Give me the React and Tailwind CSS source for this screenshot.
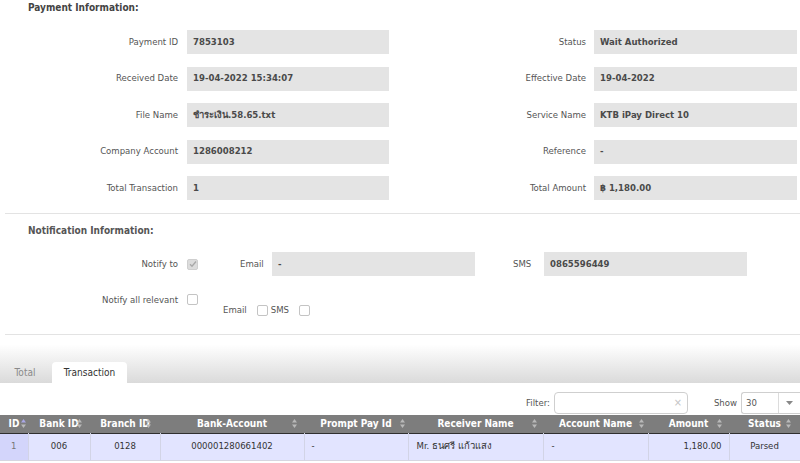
import React from "react";

const FONT = { fontFamily: '"DejaVu Sans Condensed", "DejaVu Sans", "Noto Sans", sans-serif' };

const leftRows = [
  ["Payment ID", "7853103"],
  ["Received Date", "19-04-2022 15:34:07"],
  ["File Name", "ชำระเงิน.58.65.txt"],
  ["Company Account", "1286008212"],
  ["Total Transaction", "1"],
];

const rightRows = [
  ["Status", "Wait Authorized"],
  ["Effective Date", "19-04-2022"],
  ["Service Name", "KTB iPay Direct 10"],
  ["Reference", "-"],
  ["Total Amount", "฿ 1,180.00"],
];

const columns = [
  { name: "ID", w: 28, icon: 2, active: true },
  { name: "Bank ID", w: 62, icon: 8 },
  { name: "Branch ID", w: 70, icon: 9 },
  { name: "Bank-Account", w: 144, icon: 7 },
  { name: "Prompt Pay Id", w: 104, icon: 3 },
  { name: "Receiver Name", w: 135, icon: 6 },
  { name: "Account Name", w: 105, icon: 4 },
  { name: "Amount", w: 81, icon: 7 },
  { name: "Status", w: 71, icon: 9 },
];

const row = [
  { v: "1", a: "text-center", id: true },
  { v: "006", a: "text-center" },
  { v: "0128", a: "text-center" },
  { v: "000001280661402", a: "text-center" },
  { v: "-", a: "text-left pl-[7px]" },
  { v: "Mr. ธนศรี แก้วแสง", a: "text-left pl-[8px]" },
  { v: "-", a: "text-left pl-[8px]" },
  { v: "1,180.00", a: "text-right pr-[7px]" },
  { v: "Parsed", a: "text-center" },
];

function SortIcon({ active }) {
  return (
    <svg width="5" height="9" viewBox="0 0 5 9">
      <path d="M2.5 0L5 3.5H0z" fill={active ? "#a9a6e6" : "#b9b9b9"} />
      <path d="M2.5 9L5 5.5H0z" fill="#b9b9b9" />
    </svg>
  );
}

function Checkbox({ checked }) {
  return (
    <span
      className={`inline-flex items-center justify-center w-[11px] h-[11px] rounded-[2px] border ${
        checked ? "bg-[#dcdcdc] border-[#cfcfcf]" : "bg-white border-[#c4c4c4]"
      }`}
    >
      {checked && (
        <svg width="8" height="8" viewBox="0 0 8 8">
          <path d="M1 4.2L3 6.2L7 1.5" stroke="#a8a8a8" strokeWidth="1.3" fill="none" />
        </svg>
      )}
    </span>
  );
}

function Field({ label, value, labelW, gap, inputW }) {
  return (
    <div className="flex items-center h-6">
      <div className="text-right text-[9.5px] text-[#555]" style={{ width: labelW }}>
        {label}
      </div>
      <div
        className="h-6 bg-[#e4e4e4] flex items-center pl-[6px] text-[9.5px] font-bold text-[#4a4a4a]"
        style={{ marginLeft: gap, width: inputW }}
      >
        {value}
      </div>
    </div>
  );
}

export default function App() {
  return (
    <div className="w-[800px] h-[463px] bg-white overflow-hidden" style={FONT}>
      {/* Payment Information */}
      <div className="pl-[28px] h-[30px] text-[10px] font-bold text-[#444]">
        Payment Information:
      </div>
      <div className="flex">
        <div className="w-[400px] flex flex-col gap-y-[12.5px]">
          {leftRows.map(([l, v]) => (
            <Field key={l} label={l} value={v} labelW={178} gap={9} inputW={202} />
          ))}
        </div>
        <div className="w-[400px] flex flex-col gap-y-[12.5px]">
          {rightRows.map(([l, v]) => (
            <Field key={l} label={l} value={v} labelW={186} gap={8} inputW={203} />
          ))}
        </div>
      </div>

      <div className="ml-[5px] mt-[13px] border-t border-[#e3e3e3]" />

      {/* Notification Information */}
      <div className="pl-[28px] pt-[9px] h-[38px] text-[10px] font-bold text-[#555]">
        Notification Information:
      </div>
      <div className="flex items-center h-6">
        <div className="w-[178px] text-right text-[9.5px] text-[#555]">Notify to</div>
        <div className="ml-[9px] flex">
          <Checkbox checked />
        </div>
        <div className="ml-[42px] w-[23px] text-[9.5px] text-[#555]">Email</div>
        <div className="ml-[9px] w-[203px] h-6 bg-[#e4e4e4] flex items-center pl-[6px] text-[9.5px] font-bold text-[#4a4a4a]">
          -
        </div>
        <div className="ml-[38px] w-[20px] text-[9.5px] text-[#555]">SMS</div>
        <div className="ml-[11px] w-[203px] h-6 bg-[#e4e4e4] flex items-center pl-[6px] text-[9.5px] font-bold text-[#4a4a4a]">
          0865596449
        </div>
      </div>
      <div className="flex h-[58px] pt-[18px]">
        <div className="w-[178px] text-right text-[9.5px] text-[#555] leading-[11px]">
          Notify all relevant
        </div>
        <div className="ml-[9px] flex">
          <Checkbox />
        </div>
        <div className="ml-[25px] flex items-center gap-[10px] pt-[11px] h-[22px] text-[9.5px] text-[#555]">
          <span>Email</span>
          <span className="flex items-center gap-[3px]">
            <Checkbox />
            <span>SMS</span>
          </span>
          <Checkbox />
        </div>
      </div>

      <div className="ml-[5px] border-t border-[#e3e3e3]" />

      {/* Tabs */}
      <div className="h-[48px] bg-gradient-to-b from-white from-[20%] to-[#dadada] flex items-end pl-[5px]">
        <div className="w-[40px] h-[21px] flex items-center justify-center text-[10px] text-[#8a8a8a]">
          Total
        </div>
        <div className="ml-[7px] w-[75px] h-[21px] bg-white rounded-t-[4px] flex items-center justify-center text-[10px] text-[#333]">
          Transaction
        </div>
      </div>

      {/* Filter */}
      <div className="h-[32px] pt-[8px] flex items-center justify-end text-[9.5px] text-[#555]">
        <span>Filter:</span>
        <div className="ml-[4px] w-[134px] h-[22px] border border-[#cfcfcf] rounded-[4px] bg-white flex items-center justify-end pr-[5px] text-[11px] text-[#c4c4c4]">
          ×
        </div>
        <span className="ml-[26px]">Show</span>
        <div className="ml-[4px] w-[59px] h-[22px] border border-[#cfcfcf] rounded-l-[3px] border-r-0 bg-white flex items-center">
          <span className="pl-[4px] w-[36px] text-[#555]">30</span>
          <span className="flex-1 h-full border-l border-[#dcdcdc] flex items-center justify-center">
            <svg width="7" height="4" viewBox="0 0 7 4">
              <path d="M0 0H7L3.5 4z" fill="#888" />
            </svg>
          </span>
        </div>
      </div>

      {/* Table */}
      <table className="table-fixed border-collapse w-[800px]">
        <colgroup>
          {columns.map((c) => (
            <col key={c.name} style={{ width: c.w }} />
          ))}
        </colgroup>
        <thead>
          <tr className="bg-[#7d7d7d] h-[18px] border-b border-[#2f2f2f]">
            {columns.map((c) => (
              <th
                key={c.name}
                className="relative p-0 text-center text-[10px] font-bold text-white leading-[17px]"
              >
                {c.name}
                <span className="absolute top-[4px] flex" style={{ right: c.icon }}>
                  <SortIcon active={c.active} />
                </span>
              </th>
            ))}
          </tr>
        </thead>
        <tbody>
          <tr className="h-[27px] bg-[#e2e4ff] border-b border-[#d6d6e0]">
            {row.map((c, i) => (
              <td
                key={i}
                className={`p-0 text-[9.5px] text-[#333] border-r border-[#d2d4e6] ${c.a} ${
                  c.id ? "bg-[#d3d5fb] text-[#777]" : ""
                }`}
              >
                {c.v}
              </td>
            ))}
          </tr>
        </tbody>
      </table>
    </div>
  );
}
